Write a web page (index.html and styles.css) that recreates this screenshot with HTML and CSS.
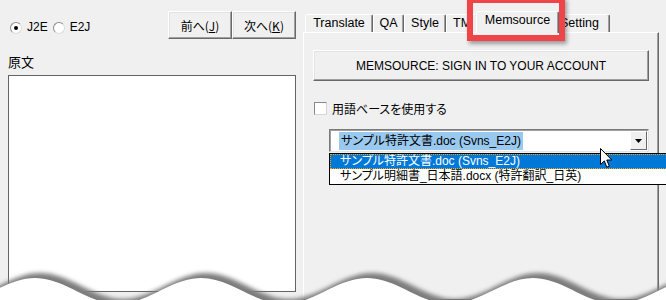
FILE: index.html
```html
<!DOCTYPE html>
<html lang="ja">
<head>
<meta charset="utf-8">
<link rel="stylesheet" href="styles.css">
</head>
<body>
<div class="app">
  <div class="left">
    <div class="toprow">
      <div class="dir">
        <span class="radio"><span class="rb checked"></span>J2E</span>
        <span class="radio"><span class="rb"></span>E2J</span>
      </div>
      <div class="navbtns">
        <button class="btn">前へ(<u>J</u>)</button>
        <button class="btn">次へ(<u>K</u>)</button>
      </div>
    </div>
    <div class="srclabel">原文</div>
    <div class="textarea"></div>
  </div>
  <div class="right">
    <div class="tabs">
      <div class="tab w-translate">Translate</div>
      <div class="tab w-qa">QA</div>
      <div class="tab w-style">Style</div>
      <div class="tab w-tm">TM</div>
      <div class="tab active w-mem">Memsource</div>
      <div class="tab w-setting">Setting</div>
    </div>
    <div class="panel">
      <button class="wide">MEMSOURCE: SIGN IN TO YOUR ACCOUNT</button>
      <div class="check"><span class="cb"></span><span class="jp">用語ベースを使用する</span></div>
      <div class="combo-wrap">
        <div class="combo">
          <span class="sel jp">サンプル特許文書.doc (Svns_E2J)</span>
          <span class="ddbtn"><svg width="7" height="4" viewBox="0 0 7 4"><path d="M0 0H7L3.5 4Z" fill="#000"/></svg></span>
        </div>
        <div class="list">
          <div class="item current jp">サンプル特許文書.doc (Svns_E2J)</div>
          <div class="item jp">サンプル明細書_日本語.docx (特許翻訳_日英)</div>
        </div>
      </div>
    </div>
  </div>
  <div class="highlight"></div>
  <svg class="cursor" width="14" height="22" viewBox="0 0 14 22">
    <path d="M0.5 0.5V16.5L4.3 12.9L6.8 19.2L9.3 18.2L6.8 12H11.8Z" fill="#fff" stroke="#000" stroke-width="1" stroke-linejoin="round"/>
  </svg>
  <svg class="tear" width="666" height="40" viewBox="0 262 666 40">
    <defs>
      <filter id="blur" x="-5%" y="-50%" width="110%" height="200%"><feGaussianBlur stdDeviation="2"/></filter>
    </defs>
    <path filter="url(#blur)" fill="#7d7d7d" d="M-43,299 C-13,299 10,273 40,273 C70,273 93,299 123,299 C153,299 176,273 206,273 C236,273 259,299 289,299 C319,299 342,273 372,273 C402,273 425,299 455,299 C485,299 508,273 538,273 C568,273 591,299 621,299 C651,299 674,273 704,273 L704,320 L-43,320 Z"/>
    <path fill="#fff" transform="translate(-5,5)" d="M-43,299 C-13,299 10,273 40,273 C70,273 93,299 123,299 C153,299 176,273 206,273 C236,273 259,299 289,299 C319,299 342,273 372,273 C402,273 425,299 455,299 C485,299 508,273 538,273 C568,273 591,299 621,299 C651,299 674,273 704,273 C734,273 757,299 787,299 L787,320 L-43,320 Z"/>
  </svg>
</div>
</body>
</html>
```

FILE: styles.css
```css
* { box-sizing: border-box; }
html, body { margin: 0; padding: 0; }
body {
  width: 666px;
  height: 300px;
  overflow: hidden;
  background: #f0f0f0;
  font-family: "Liberation Sans", "Noto Sans CJK JP", sans-serif;
  font-size: 12px;
  color: #000;
}
.app {
  position: relative;
  display: flex;
  width: 666px;
  height: 300px;
}
.left {
  width: 303px;
  flex: none;
  padding: 0 7px 0 8px;
}
.toprow {
  display: flex;
  justify-content: space-between;
  padding-top: 11px;
}
.dir {
  display: flex;
  gap: 5px;
  padding-top: 5px;
  padding-left: 2px;
  line-height: 13px;
}
.radio {
  display: flex;
  align-items: center;
  gap: 5px;
}
.rb {
  width: 12px;
  height: 12px;
  border-radius: 50%;
  border: 1px solid #8c8c8c;
  border-right-color: #dcdcdc;
  border-bottom-color: #dcdcdc;
  background: #fff;
  display: flex;
  align-items: center;
  justify-content: center;
}
.rb.checked::after {
  content: "";
  width: 4px;
  height: 4px;
  border-radius: 50%;
  background: #000;
}
.navbtns { display: flex; gap: 0; }
.btn {
  width: 64px;
  height: 28px;
  margin: 0;
  padding: 0;
  font: inherit;
  font-family: "Noto Sans CJK JP", "Liberation Sans", sans-serif;
  font-size: 12px;
  color: #000;
  background: #f0f0f0;
  border: 1px solid;
  border-color: #fff #696969 #696969 #fff;
  box-shadow: inset -1px -1px 0 #a0a0a0, inset 1px 1px 0 #e3e3e3;
}
.btn + .btn { margin-left: 0; }
.srclabel {
  margin-top: 15px;
  line-height: 16px;
  font-family: "Noto Sans CJK JP", sans-serif;
  font-size: 13px;
}
.textarea {
  margin-top: 5px;
  width: 288px;
  height: 217px;
  background: #fff;
  border: 1px solid #646464;
}
.right {
  flex: 1;
  display: flex;
  flex-direction: column;
}
.tabs {
  display: flex;
  align-items: flex-end;
  height: 32px;
  padding-left: 2px;
  position: relative;
  z-index: 1;
}
.tab {
  height: 18px;
  line-height: 16px;
  text-align: center;
  font-size: 12.5px;
  border: 1px solid;
  border-bottom: none;
  border-color: #fff #696969 transparent #fff;
  box-shadow: inset -1px 0 0 #a0a0a0;
  background: #f0f0f0;
  border-radius: 2px 2px 0 0;
  white-space: nowrap;
  overflow: hidden;
}
.w-translate { width: 68px; }
.w-qa { width: 31px; }
.w-style { width: 42px; }
.w-tm { width: 32px; text-align: left; padding-left: 6px; }
.w-mem { width: 83px; }
.w-setting { width: 53px; text-align: left; padding-left: 2px; }
.tab.active {
  height: 22px;
  margin: 0 -2px -1px -2px;
  line-height: 17px;
  position: relative;
  z-index: 2;
}
.panel {
  width: 356px;
  flex: 1;
  border: 1px solid;
  border-color: #fff #696969 #696969 #fff;
  box-shadow: inset -1px 0 0 #a0a0a0;
  padding: 17px 0 0 9px;
}
.wide {
  display: block;
  width: 336px;
  height: 31px;
  margin: 0;
  padding: 0;
  font: inherit;
  font-size: 12px;
  color: #000;
  background: #f0f0f0;
  border: 1px solid;
  border-color: #fff #696969 #696969 #fff;
  box-shadow: inset -1px -1px 0 #a0a0a0, inset 1px 1px 0 #e3e3e3;
}
.jp {
  font-family: "Liberation Sans", "Noto Sans CJK JP", sans-serif;
  font-feature-settings: "palt";
}
.check {
  display: flex;
  align-items: center;
  gap: 5px;
  margin-top: 20px;
  margin-left: 1px;
  height: 15px;
}
.cb {
  width: 13px;
  height: 13px;
  background: #fff;
  border: 1px solid #8a8a8a;
  border-right-color: #d5d5d5;
  border-bottom-color: #d5d5d5;
}
.combo-wrap {
  position: relative;
  margin-top: 13px;
  margin-left: 16px;
}
.combo {
  width: 320px;
  height: 23px;
  background: #fff;
  border: 1px solid;
  border-color: #7a7a7a #e3e3e3 #e3e3e3 #7a7a7a;
  box-shadow: inset 1px 1px 0 #a0a0a0;
  display: flex;
  align-items: center;
  justify-content: space-between;
  padding: 0 1px 0 9px;
}
.sel {
  background: #99c9ef;
  padding: 1px 2px;
  line-height: 16px;
}
.ddbtn {
  width: 17px;
  height: 19px;
  background: #f0f0f0;
  border: 1px solid;
  border-color: #fff #696969 #696969 #fff;
  display: flex;
  align-items: center;
  justify-content: center;
}
.list {
  position: absolute;
  left: 0;
  top: 24px;
  width: 342px;
  border: 1px solid #000;
  background: #fff;
  z-index: 3;
}
.item {
  height: 15px;
  line-height: 14px;
  padding-left: 10px;
  white-space: nowrap;
}
.item.current {
  background: #0078d7;
  color: #fff;
  outline: 1px dotted #f7a300;
  outline-offset: -1px;
}
.highlight {
  position: absolute;
  left: 467px;
  top: -3px;
  width: 98px;
  height: 44px;
  border: 6px solid #ef4549;
  box-shadow: 2px 3px 4px rgba(0, 0, 0, 0.35);
  z-index: 5;
}
.cursor {
  position: absolute;
  left: 600px;
  top: 148px;
  z-index: 6;
}
.tear {
  position: absolute;
  left: 0;
  top: 262px;
  z-index: 7;
}
```
